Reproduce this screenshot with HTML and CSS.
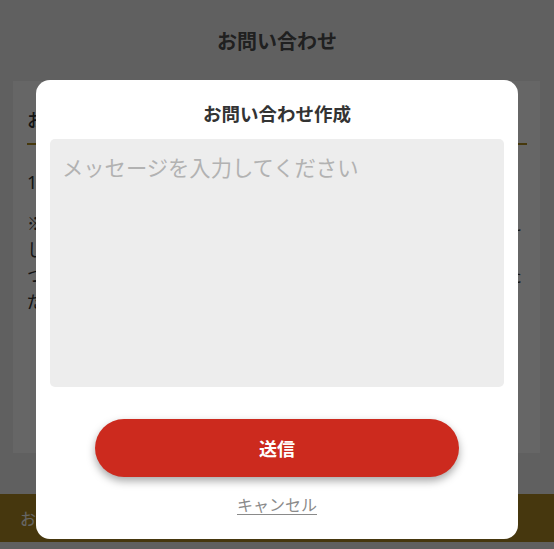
FILE: index.html
```html
<!DOCTYPE html>
<html lang="ja">
<head>
<meta charset="utf-8">
<title>お問い合わせ</title>
<link rel="stylesheet" href="styles.css">
</head>
<body>
<div class="page">
  <header class="header">お問い合わせ</header>
  <section class="card">
    <h2 class="card-title">お問い合わせ履歴</h2>
    <p class="count">1件</p>
    <p class="note">※お問い合わせいただいた内容につきましては、順次確認のうえしばらくお待ちくださいますよう、よろしくお願いいたします。つきましては、内容によっては返信までに数日ほどお時間をいただく場合がございます。あらかじめご了承ください。</p>
  </section>
  <footer class="footer">お問い合わせ作成</footer>
</div>
<div class="overlay">
  <div class="modal">
    <h3 class="modal-title">お問い合わせ作成</h3>
    <textarea class="message" placeholder="メッセージを入力してください"></textarea>
    <button class="send" type="button">送信</button>
    <a class="cancel" href="#">キャンセル</a>
  </div>
</div>
</body>
</html>
```
FILE: styles.css
```css
* { box-sizing: border-box; }
html, body {
  margin: 0;
  padding: 0;
  width: 554px;
  height: 549px;
  overflow: hidden;
  font-family: "Noto Sans CJK JP", "Noto Sans", sans-serif;
}
.page {
  background: #f0f0f0;
  height: 549px;
  display: flex;
  flex-direction: column;
}
.header {
  height: 81px;
  display: flex;
  align-items: center;
  justify-content: center;
  font-size: 20px;
  font-weight: 700;
  color: #505050;
}
.card {
  background: #fff;
  margin: 0 14px 0 13px;
  padding: 24px 13px 0 14px;
  height: 372px;
}
.card-title {
  margin: 0;
  font-family: "Noto Sans CJK JP", "Noto Sans", sans-serif;
  font-size: 18px;
  font-weight: 500;
  line-height: 28px;
  color: #333;
  padding-bottom: 10px;
  border-bottom: 2px solid #b08d1e;
}
.count {
  margin: 24px 0 0;
  font-family: "Noto Sans", "Noto Sans CJK JP", sans-serif;
  font-size: 18px;
  line-height: 26px;
  color: #333;
}
.note {
  margin: 15px 5px 0 0;
  font-family: "Noto Sans CJK JP", "Noto Sans", sans-serif;
  font-size: 17px;
  line-height: 26px;
  color: #333;
  text-align: justify;
}
.footer {
  margin-top: 41px;
  height: 48px;
  background: #ae8a25;
  color: #fff;
  font-size: 16px;
  display: flex;
  align-items: center;
  padding-left: 20px;
}
.overlay {
  position: fixed;
  inset: 0;
  background: rgba(0, 0, 0, 0.6);
  display: flex;
  justify-content: center;
  align-items: flex-start;
  padding-top: 80px;
}
.modal {
  width: 482px;
  background: #fff;
  border-radius: 14px;
  padding: 19px 14px 23px;
  display: flex;
  flex-direction: column;
  align-items: center;
}
.modal-title {
  margin: 0;
  font-size: 18.5px;
  font-weight: 700;
  line-height: 28px;
  color: #333;
}
.message {
  margin-top: 12px;
  width: 454px;
  height: 248px;
  border: none;
  border-radius: 5px;
  background: #ededed;
  resize: none;
  padding: 14px 12px;
  font-family: "Noto Sans CJK JP", "Noto Sans", sans-serif;
  font-size: 21.3px;
  line-height: 27px;
  color: #333;
  outline: none;
}
.message::placeholder {
  color: #b2b2b2;
}
.send {
  margin-top: 32px;
  width: 364px;
  height: 58px;
  border: none;
  border-radius: 29px;
  background: #cc2a1e;
  color: #fff;
  font-family: "Noto Sans CJK JP", "Noto Sans", sans-serif;
  font-size: 18px;
  font-weight: 700;
  box-shadow: 0 4px 8px rgba(0, 0, 0, 0.35);
}
.cancel {
  margin-top: 15px;
  font-size: 16px;
  line-height: 24px;
  color: #8a8a8a;
  text-decoration: underline;
  text-underline-offset: 3px;
}
```
